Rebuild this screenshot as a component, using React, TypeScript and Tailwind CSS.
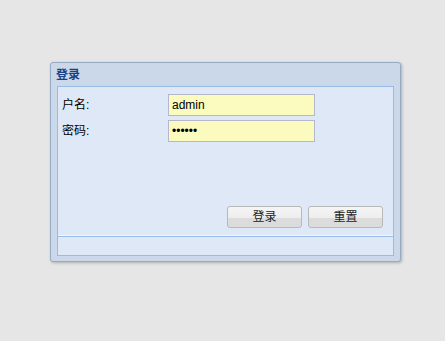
import React, { useState } from "react";

const font = { fontFamily: '"Liberation Sans", "Noto Sans CJK SC", sans-serif' };

export default function App() {
  const [user, setUser] = useState("admin");
  const [pwd, setPwd] = useState("123456");

  return (
    <div className="min-h-[341px] w-[445px] bg-[#e6e6e6] pl-[50px] pt-[62px]" style={font}>
      <div className="w-[351px] h-[200px] rounded-[3px] border border-[#98abc6] bg-[#cbd8e9] shadow-[1px_1px_3px_rgba(0,0,0,0.25)] flex flex-col">
        <div className="h-[23px] px-[5px] flex items-center text-[12px] font-bold text-[#15428b]">登录</div>
        <div className="flex-1 px-[6px] pb-[5px] flex flex-col">
          <div className="h-[151px] border border-[#99bbe8] bg-[#dfe8f6] shadow-[inset_0_-1px_0_#f4f8fd] flex flex-col px-[4px] pt-[7px] pb-[8px]">
            <div className="flex items-center h-[22px] text-[12px] text-black">
              <span className="w-[106px]">户名:</span>
              <input
                value={user}
                onChange={(e) => setUser(e.target.value)}
                className="w-[147px] h-[22px] border border-[#b5b8c8] bg-[#fbfbbf] px-[3px] text-[12px] outline-none"
              />
            </div>
            <div className="flex items-center h-[22px] mt-[4px] text-[12px] text-black">
              <span className="w-[106px]">密码:</span>
              <input
                type="password"
                value={pwd}
                onChange={(e) => setPwd(e.target.value)}
                className="w-[147px] h-[22px] border border-[#b5b8c8] bg-[#fbfbbf] px-[3px] text-[12px] outline-none"
              />
            </div>
            <div className="mt-auto flex justify-end gap-[6px] pr-[6px]">
              <button className="w-[75px] h-[22px] rounded-[3px] border border-[#b8b8b8] bg-[linear-gradient(#f5f5f5_0,#ededed_55%,#dcdcdc_55%,#dcdcdc_100%)] text-[12px] text-[#222]">
                登录
              </button>
              <button className="w-[75px] h-[22px] rounded-[3px] border border-[#b8b8b8] bg-[linear-gradient(#f5f5f5_0,#ededed_55%,#dcdcdc_55%,#dcdcdc_100%)] text-[12px] text-[#222]">
                重置
              </button>
            </div>
          </div>
          <div className="flex-1 border border-t-0 border-[#99bbe8] bg-[#dfe8f6]" />
        </div>
      </div>
    </div>
  );
}
